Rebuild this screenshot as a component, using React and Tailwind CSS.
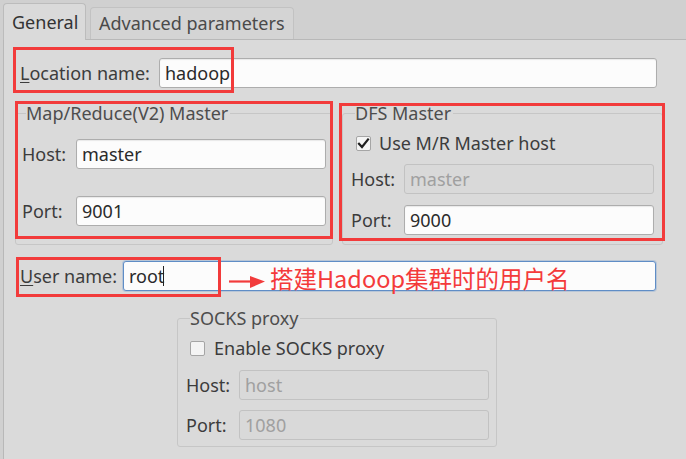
import React from "react";

const font = { fontFamily: '"Noto Sans", "Open Sans", "Noto Sans CJK SC", sans-serif' };

function TextInput({ value, width, disabled, focused, cursor }) {
  const base = "h-[30px] rounded-[3px] flex items-center px-[5px] text-[18px] leading-none";
  let tone = "bg-[#fcfcfc] border border-[#adadad] text-[#2a2a2a] shadow-[inset_0_1px_1px_rgba(0,0,0,0.08)]";
  if (disabled) tone = "bg-[#d9d9d9] border border-[#c2c2c2] text-[#a0a0a0]";
  if (focused) tone = "bg-[#fcfcfc] border border-[#5f8dc6] text-[#2a2a2a] shadow-[0_0_0_1px_rgba(120,160,210,0.35)]";
  return (
    <div className={`${base} ${tone}`} style={{ width }}>
      <span>{value}</span>
      {cursor && <span className="w-px h-[20px] bg-[#222] -ml-[1px]" />}
    </div>
  );
}

function Checkbox({ checked }) {
  return (
    <span className="w-[15px] h-[15px] rounded-[2px] border border-[#a5a5a5] bg-[#f4f4f4] flex items-center justify-center">
      {checked && (
        <svg width="13" height="13" viewBox="0 0 13 13">
          <path d="M2 6.8 L5 10 L11 2.5" fill="none" stroke="#1e1e1e" strokeWidth="2.2" strokeLinecap="square" />
        </svg>
      )}
    </span>
  );
}

function Group({ title, className, children }) {
  return (
    <fieldset className={`border border-[#c6c6c6] rounded-[3px] ${className}`}>
      <legend className="ml-[4px] pr-[2px] text-[18px] leading-[20px] text-[#4d4d4d]">{title}</legend>
      {children}
    </fieldset>
  );
}

function Field({ label, labelW, children, className = "" }) {
  return (
    <div className={`flex items-center ${className}`}>
      <span className="text-[18px] text-[#3c3c3c] shrink-0" style={{ width: labelW }}>{label}</span>
      {children}
    </div>
  );
}

const Red = ({ x, y, w, h }) => (
  <div className="absolute border-[3px] border-[#f23b3b] pointer-events-none" style={{ left: x, top: y, width: w, height: h }} />
);

export default function App() {
  return (
    <div className="relative w-[686px] h-[459px] bg-[#d0d0d0] overflow-hidden" style={font}>
      {/* tabs */}
      <div className="h-[39px] flex items-end pl-[3px] gap-[4px]">
        <div className="relative z-10 -mb-px w-[83px] h-[37px] bg-[#dadada] border border-b-0 border-[#bcbcbc] rounded-t-[4px] flex items-center pl-[8px] text-[18px] text-[#333]">
          General
        </div>
        <div className="w-[204px] h-[32px] bg-[#d4d4d4] border border-b-0 border-[#c2c2c2] rounded-t-[4px] flex items-center pl-[8px] text-[18px] text-[#4a4a4a]">
          Advanced parameters
        </div>
      </div>

      {/* page */}
      <div className="ml-[3px] h-[420px] bg-[#dadada] border-l border-t border-[#b8b8b8] flex flex-col">
        <Field
          className="mt-[18px] ml-[16px]"
          labelW={139}
          label={<><span className="underline underline-offset-2">L</span>ocation name:</>}
        >
          <TextInput value="hadoop" width={498} />
        </Field>

        <div className="mt-[15px] ml-[11px] flex gap-[9px]">
          <Group title="Map/Reduce(V2) Master" className="w-[318px] h-[142px] pl-[6px]">
            <Field className="mt-[16px]" labelW={54} label="Host:">
              <TextInput value="master" width={250} />
            </Field>
            <Field className="mt-[27px]" labelW={54} label="Port:">
              <TextInput value="9001" width={250} />
            </Field>
          </Group>
          <Group title="DFS Master" className="w-[321px] h-[142px] pl-[8px]">
            <div className="mt-[10px] ml-[5px] h-[20px] flex items-center gap-[8px] text-[18px] leading-[20px] text-[#3c3c3c]">
              <Checkbox checked />
              <span>Use M/R Master host</span>
            </div>
            <Field className="mt-[11px]" labelW={53} label="Host:">
              <TextInput value="master" width={250} disabled />
            </Field>
            <Field className="mt-[11px]" labelW={53} label="Port:">
              <TextInput value="9000" width={250} />
            </Field>
          </Group>
        </div>

        <Field
          className="mt-[16px] ml-[16px]"
          labelW={103}
          label={<><span className="underline underline-offset-2">U</span>ser name:</>}
        >
          <TextInput value="root" width={533} focused cursor />
        </Field>

        <Group title="SOCKS proxy" className="mt-[17px] ml-[173px] w-[320px] h-[139px] pl-[8px]">
          <div className="mt-[10px] ml-[4px] h-[20px] flex items-center gap-[9px] text-[18px] leading-[20px] text-[#3c3c3c]">
            <Checkbox />
            <span>Enable SOCKS proxy</span>
          </div>
          <Field className="mt-[12px]" labelW={53} label="Host:">
            <TextInput value="host" width={250} disabled />
          </Field>
          <Field className="mt-[10px]" labelW={53} label="Port:">
            <TextInput value="1080" width={250} disabled />
          </Field>
        </Group>
      </div>

      {/* annotations */}
      <Red x={13} y={47} w={221} h={46} />
      <Red x={15} y={101} w={318} h={138} />
      <Red x={339} y={103} w={326} h={138} />
      <Red x={16} y={257} w={205} h={40} />
      <svg className="absolute left-[228px] top-[272px]" width="40" height="20" viewBox="0 0 40 20">
        <line x1="1" y1="9.5" x2="26" y2="9.5" stroke="#f23b3b" strokeWidth="2.2" />
        <path d="M22 4 L37 9.5 L22 16 Z" fill="#f23b3b" />
      </svg>
      <div
        className="absolute left-[270px] top-[263px] text-[23.5px] leading-[30px] text-[#f43a3a] whitespace-nowrap"
        style={{ fontFamily: '"Noto Sans CJK SC", "Noto Sans", sans-serif' }}
      >
        搭建Hadoop集群时的用户名
      </div>
    </div>
  );
}
